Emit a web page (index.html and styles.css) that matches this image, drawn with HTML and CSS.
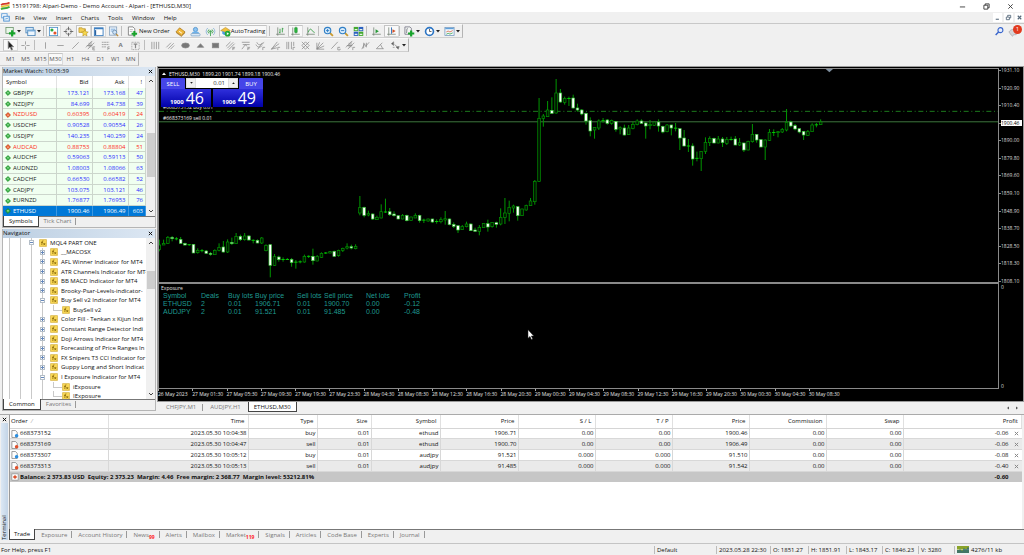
FILE: index.html
```html
<!DOCTYPE html>
<html lang="en">
<head>
<meta charset="utf-8">
<title>15191798: Alpari-Demo - Demo Account - Alpari - [ETHUSD,M30]</title>
<link rel="stylesheet" href="styles.css">
</head>
<body>
<svg class="defs" aria-hidden="true">
  <symbol id="caret" viewBox="0 0 4 3"><path d="M0 0h4L2 2.6z" fill="#222"/></symbol>
  <symbol id="i-up" viewBox="0 0 8 8"><path d="M4 .6 7.4 4 4 7.4 .6 4z" fill="#2fae3c" stroke="#137a1f" stroke-width=".7"/><path d="M2.6 4.2 4 2.6l1.4 1.6z" fill="#dff7df"/></symbol>
  <symbol id="i-down" viewBox="0 0 8 8"><path d="M4 .6 7.4 4 4 7.4 .6 4z" fill="#ec5a2a" stroke="#a83210" stroke-width=".7"/><path d="M2.6 3.8 4 5.4l1.4-1.6z" fill="#ffe6dc"/></symbol>
  <symbol id="i-ind" viewBox="0 0 8 8"><rect x=".4" y=".4" width="7.2" height="7.2" rx=".6" fill="#f7d655" stroke="#d0a93a" stroke-width=".6"/><path d="M4.4 1.8c-1-.4-1.2.6-1.3 1.6L2.8 6M2 3.4h2M4.4 4l1.8 2.2M6.2 4 4.4 6.2" stroke="#7a5a00" stroke-width=".7" fill="none"/></symbol>
  <symbol id="i-doc-b" viewBox="0 0 9 9"><path d="M1 .6h4l2 2v5.8H1z" fill="#fff" stroke="#666" stroke-width=".7"/><circle cx="6.3" cy="6.5" r="2" fill="#2b8fe0"/></symbol>
  <symbol id="i-doc-s" viewBox="0 0 9 9"><path d="M1 .6h4l2 2v5.8H1z" fill="#fff" stroke="#666" stroke-width=".7"/><circle cx="6.3" cy="6.5" r="2" fill="#e2502a"/></symbol>
  <symbol id="i-x" viewBox="0 0 6 6"><path d="M1 1l4 4M5 1 1 5" stroke="currentColor" stroke-width="1.2"/></symbol>
  <symbol id="i-axes" viewBox="0 0 12 12"><path d="M3 1.5v9M1.2 9h9.5" stroke="#6d7d6d" stroke-width=".8" fill="none"/></symbol>
  <symbol id="sc-up" viewBox="0 0 6 6"><path d="M1 4l2-2 2 2" stroke="#444" fill="none"/></symbol>
  <symbol id="sc-dn" viewBox="0 0 6 6"><path d="M1 2l2 2 2-2" stroke="#444" fill="none"/></symbol>
</svg>

<header class="titlebar">
  <svg class="logo" viewBox="0 0 12 10"><path d="M1 3.4C4 .8 6 3.6 10.5.6" stroke="#d23a2a" stroke-width="2" fill="none"/><path d="M1 5.8C4 3.2 6 6 10.5 3" stroke="#e8c32c" stroke-width="1.6" fill="none"/><path d="M1 8.2C4 5.6 6 8.4 10.5 5.4" stroke="#3da63a" stroke-width="2" fill="none"/></svg>
  <h1>15191798: Alpari-Demo - Demo Account - Alpari - [ETHUSD,M30]</h1>
  <div class="winctl">
    <button aria-label="Minimize"><svg viewBox="0 0 8 8"><path d="M1 4.5h6" stroke="#333"/></svg></button>
    <button aria-label="Restore"><svg viewBox="0 0 8 8"><path d="M1 2.5h4.5V7H1zM2.5 2.5V1H7v4.5H5.5" stroke="#333" fill="none"/></svg></button>
    <button aria-label="Close"><svg viewBox="0 0 8 8"><path d="M1.5 1.5l5 5M6.5 1.5l-5 5" stroke="#333"/></svg></button>
  </div>
</header>

<nav class="menubar">
  <svg class="doc" viewBox="0 0 10 10"><rect x=".8" y=".8" width="6" height="4.6" fill="#fff" stroke="#5b9bd8"/><rect x="3" y="3.6" width="6.2" height="5.4" fill="#e6f1fb" stroke="#4a8fd0"/><path d="M4.2 7.5l1.4-1.6 1 .8 1.4-1.6" stroke="#3c8bd0" fill="none" stroke-width=".7"/></svg>
  <button>File</button><button>View</button><button>Insert</button><button>Charts</button><button>Tools</button><button>Window</button><button>Help</button>
  <div class="mdi">
    <button aria-label="Minimize chart"><svg viewBox="0 0 8 8"><path d="M2 6h3.6" stroke="#56687a" stroke-width="1.2"/></svg></button>
    <button aria-label="Restore chart"><svg viewBox="0 0 8 8"><path d="M1.5 3.5h3.5v3H1.5zM3 3.2V1.5h3.5v3H5.2" stroke="#56687a" fill="none"/></svg></button>
    <button aria-label="Close chart"><svg viewBox="0 0 8 8"><path d="M2 2l4 4M6 2 2 6" stroke="#56687a" stroke-width="1.3"/></svg></button>
  </div>
</nav>

<div class="toolrow">
  <div class="toolbar">
    <button class="split" aria-label="New chart"><svg class="ic" viewBox="0 0 12 12"><rect x="1" y="1.5" width="8" height="6.5" fill="#e9f6e9" stroke="#5e8a5e" stroke-width=".8"/><path d="M7.8 4.5v7M4.3 8h7" stroke="#17a32b" stroke-width="2.4"/></svg><svg class="caret"><use href="#caret"/></svg></button>
    <button class="split" aria-label="Profiles"><svg class="ic" viewBox="0 0 12 12"><rect x="1" y="1.5" width="8" height="6" fill="#d6e9fa" stroke="#4682b8" stroke-width=".9"/><rect x="3" y="4.5" width="8" height="6" fill="#eef6fd" stroke="#4682b8" stroke-width=".9"/><path d="M3.4 5.4h7.2" stroke="#5fa0da"/></svg><svg class="caret"><use href="#caret"/></svg></button>
    <i class="sep"></i>
    <button class="on" aria-label="Market Watch"><svg class="ic" viewBox="0 0 12 12"><rect x="1.5" y="1.5" width="9" height="9" fill="#fff" stroke="#4a90c8" stroke-width=".9"/><circle cx="4.3" cy="4.3" r="1.7" fill="#29a83a"/><circle cx="7.6" cy="7.6" r="1.7" fill="#e5532a"/></svg></button>
    <button aria-label="Data Window"><svg class="ic" viewBox="0 0 12 12"><circle cx="6" cy="6" r="3.2" fill="none" stroke="#777" stroke-width=".9"/><path d="M6 .8v3.7M6 7.5v3.700M.8 6h3.700M7.5 6h3.700" stroke="#666"/></svg></button>
    <button class="on" aria-label="Navigator"><svg class="ic" viewBox="0 0 12 12"><path d="M1 2h3.5l.8 1H8v4H1z" fill="#f4cf55" stroke="#b08a1e" stroke-width=".7"/><path d="M7.5 4l1.2 2.3 2.5.3-1.9 1.7.5 2.5-2.300-1.200-2.300 1.200.5-2.500-1.900-1.700 2.500-.3z" fill="#f7d84c" stroke="#b08a1e" stroke-width=".6"/></svg></button>
    <button class="on" aria-label="Terminal"><svg class="ic" viewBox="0 0 12 12"><rect x="1.5" y="2" width="9.5" height="8.5" fill="#fff" stroke="#3d7fc0"/><path d="M1.5 2.8H11" stroke="#3d7fc0" stroke-width="1.5"/><path d="M2.7 4.5v5.5" stroke="#2d62a0" stroke-width="1.5"/></svg></button>
    <button aria-label="Strategy Tester"><svg class="ic" viewBox="0 0 12 12"><rect x="1.5" y="1" width="8" height="9" fill="#eaf2fa" stroke="#7d9ab8" stroke-width=".8"/><path d="M3 3.5h5M3 5.5h3" stroke="#7daee0"/><circle cx="7.3" cy="6.8" r="2.2" fill="#cfe4f7" stroke="#5c7fa3" stroke-width=".8"/><path d="M8.9 8.5l2.2 2.5" stroke="#c08a30" stroke-width="1.3"/></svg></button>
    <i class="sep"></i>
    <button class="wide"><svg class="ic" viewBox="0 0 12 12"><path d="M1.5 1h5l2 2v7h-7z" fill="#fff" stroke="#666" stroke-width=".8"/><path d="M3 4h3.5M3 6h3" stroke="#999" stroke-width=".7"/><path d="M8 5.5v6M5 8.5h6" stroke="#17a32b" stroke-width="2.2"/></svg>New Order</button>
    <button aria-label="MetaEditor"><svg class="ic" viewBox="0 0 12 12"><path d="M1 6.5 5 2l6 4.5L7 10.5z" fill="#f0b83a" stroke="#a8741a" stroke-width=".8"/><path d="M1.5 7.5 7 11.3l4-4" stroke="#a8741a" fill="none" stroke-width=".8"/><path d="M4.5 5.8l3 2" stroke="#fff"/></svg></button>
    <button aria-label="Cloud"><svg class="ic" viewBox="0 0 12 12"><circle cx="6" cy="3.8" r="2.3" fill="#8cc4f2" stroke="#3f86c4" stroke-width=".8"/><path d="M2 8.2c0-3.400 8-3.400 8 0z" fill="#6db1ea"/><rect x="1" y="8.2" width="10" height="2.6" rx="1" fill="#dcebf8" stroke="#6a94bb" stroke-width=".7"/></svg></button>
    <button aria-label="Signals"><svg class="ic" viewBox="0 0 12 12"><path d="M3 2.2a5 5 0 0 0 0 7.6M9 2.2a5 5 0 0 1 0 7.6" fill="none" stroke="#8fb6d8"/><path d="M4.3 3.8a3 3 0 0 0 0 4.4M7.7 3.8a3 3 0 0 1 0 4.4" fill="none" stroke="#4aa85a"/><circle cx="6" cy="6" r="1.4" fill="#4aa85a"/><path d="M6 7v4" stroke="#4aa85a"/></svg></button>
    <button class="wide auto on"><svg class="ic" viewBox="0 0 12 12"><path d="M.8 5 6 1.5 11.2 5 6 7z" fill="#f1c13e" stroke="#b5841c" stroke-width=".6"/><path d="M2.5 5.5v3c2 2 5 2 7 0v-3L6 7z" fill="#4d9be0"/><circle cx="8.3" cy="8.4" r="3.1" fill="#22a637"/><path d="M7.4 6.9v3l2.600-1.500z" fill="#fff"/></svg>AutoTrading</button>
    <i class="sep dbl"></i>
    <button aria-label="Bar chart"><svg class="ic" viewBox="0 0 12 12"><use href="#i-axes"/><path d="M5.5 3v5M4.5 7h1M8 2v5M8 3h1.2" stroke="#2a9a3a" stroke-width=".9"/></svg></button>
    <button class="on" aria-label="Candlesticks"><svg class="ic" viewBox="0 0 12 12"><use href="#i-axes"/><path d="M6.5.8v7.4" stroke="#188a28" stroke-width=".8"/><rect x="5.2" y="2" width="2.6" height="5" fill="#2bb53e" stroke="#188a28" stroke-width=".6"/></svg></button>
    <button aria-label="Line chart"><svg class="ic" viewBox="0 0 12 12"><use href="#i-axes"/><path d="M3.5 7C5 2.5 6.5 3 7.5 4.5S9.5 7 10.5 7" stroke="#2a9a3a" fill="none" stroke-width=".9"/></svg></button>
    <i class="sep"></i>
    <button aria-label="Zoom in"><svg class="ic" viewBox="0 0 12 12"><path d="M7.5 7.5l3.3 3.3" stroke="#c99a2c" stroke-width="2"/><circle cx="5" cy="5" r="3.5" fill="#d9ecfb" stroke="#2f7fc6" stroke-width="1.2"/><path d="M5 3.2v3.6M3.2 5h3.6" stroke="#2f7fc6"/></svg></button>
    <button aria-label="Zoom out"><svg class="ic" viewBox="0 0 12 12"><path d="M7.5 7.5l3.3 3.3" stroke="#c99a2c" stroke-width="2"/><circle cx="5" cy="5" r="3.5" fill="#d9ecfb" stroke="#2f7fc6" stroke-width="1.2"/><path d="M3.2 5h3.6" stroke="#2f7fc6"/></svg></button>
    <button aria-label="Tile windows"><svg class="ic" viewBox="0 0 12 12"><rect x=".8" y="1" width="5" height="4.6" fill="#43a82f"/><rect x="6.2" y="1" width="5" height="4.6" fill="#2d62c0"/><rect x=".8" y="6.2" width="5" height="4.6" fill="#2d62c0"/><rect x="6.2" y="6.2" width="5" height="4.6" fill="#43a82f"/><path d="M1.8 4h3M7.2 4h3M1.8 9.2h3M7.2 9.2h3" stroke="#e8f4e8" stroke-width="1.3"/></svg></button>
    <i class="sep"></i>
    <button aria-label="Auto scroll"><svg class="ic" viewBox="0 0 12 12"><use href="#i-axes"/><path d="M5 3.5v4.4l3.6-2.2z" fill="#2a9a3a"/></svg></button>
    <button class="on" aria-label="Chart shift"><svg class="ic" viewBox="0 0 12 12"><use href="#i-axes"/><path d="M6 1.5v7" stroke="#2f6fb6"/><path d="M7 3.500v4l3.500-2z" fill="#d4542a"/></svg></button>
    <i class="sep"></i>
    <button class="split" aria-label="Indicators"><svg class="ic" viewBox="0 0 12 12"><path d="M1 1h5.5l1.500 1.500V9H1z" fill="#f4f7f4" stroke="#667" stroke-width=".8"/><path d="M3.8 2.5c-1 1-.7 3-1 5" stroke="#556" fill="none" stroke-width=".8"/><path d="M7.8 4.8v6.7M4.4 8.200h6.800" stroke="#17a32b" stroke-width="2.4"/></svg><svg class="caret"><use href="#caret"/></svg></button>
    <button class="split" aria-label="Periods"><svg class="ic" viewBox="0 0 12 12"><circle cx="6" cy="6" r="4.3" fill="#fff" stroke="#2c75c4" stroke-width="1.8"/><path d="M6 3.2V6h2.2" stroke="#333" fill="none" stroke-width=".8"/></svg><svg class="caret"><use href="#caret"/></svg></button>
    <button class="split" aria-label="Templates"><svg class="ic" viewBox="0 0 12 12"><rect x="1" y="1.5" width="10" height="9" fill="#f3f9ff" stroke="#6d93b8" stroke-width=".8"/><path d="M1.4 2.8h9.2" stroke="#5fa0da" stroke-width="1.4"/><path d="M2.5 6.5l2-1 2 1 3-1.5" stroke="#d4542a" fill="none" stroke-width=".8"/><path d="M2.5 9l2-1 2 .8 3-1.3" stroke="#2a9a3a" fill="none" stroke-width=".8"/></svg><svg class="caret"><use href="#caret"/></svg></button>
  </div>
  <div class="corner">
    <button aria-label="Search"><svg class="ic" viewBox="0 0 12 12"><circle cx="7" cy="4.5" r="2.7" fill="#e7effc" stroke="#3a66cc" stroke-width="1.2"/><path d="M5 6.5 1.8 9.8" stroke="#3a66cc" stroke-width="1.6"/></svg></button>
    <button aria-label="Notifications"><svg class="ic" viewBox="0 0 12 12"><path d="M1 6.5c2-3 5-3.500 8-2v5L6 9.500l-1 1.700-1.500-1.300z" fill="#d5d5d8" stroke="#a5a5aa" stroke-width=".7"/></svg><span class="badge">1</span></button>
  </div>
</div>

<div class="toolrow">
  <div class="toolbar gray">
    <button class="on" aria-label="Cursor"><svg class="ic" viewBox="0 0 12 12"><path d="M3.5 1v8.500l2-1.800L7 11l1.300-.6L7 7.400h2.500z" fill="#222"/></svg></button>
    <button aria-label="Crosshair"><svg class="ic" viewBox="0 0 12 12"><path d="M6 1.5v3.5M6 7v3.5M1.5 6H5M7 6h3.5"/></svg></button>
    <i class="sep mid"></i>
    <button aria-label="Vertical line"><svg class="ic" viewBox="0 0 12 12"><path d="M6 2.5v7"/></svg></button>
    <button aria-label="Horizontal line"><svg class="ic" viewBox="0 0 12 12"><path d="M2.5 6h7"/></svg></button>
    <button aria-label="Trendline"><svg class="ic" viewBox="0 0 12 12"><path d="M2.5 9.5l7-7"/></svg></button>
    <button aria-label="Equidistant channel"><svg class="ic" viewBox="0 0 12 12"><path d="M1 8 8 1M3 10l7-7M4.5 3v5M6.5 2v6M2 6h6M8.5 7.5h2.5M8.5 9h2M8.5 10.8h2.5M8.5 7.5v3.3"/></svg></button>
    <button aria-label="Fibonacci"><svg class="ic" viewBox="0 0 12 12"><path d="M2 2.5h8M2 5h8M2 7.5h5M8.5 7.5H11M8.5 9.3h2M8.5 7.5V11" stroke-dasharray="2 .5"/></svg></button>
    <button class="letter">A</button>
    <button aria-label="Text label"><svg class="ic" viewBox="0 0 12 12"><rect x="2" y="2.5" width="8" height="8" stroke-dasharray="1 .8" fill="none"/><path d="M4 4.5h4M6 4.5v4.5" stroke-width="1.3"/></svg></button>
    <i class="sep mid"></i>
    <button aria-label="Cycle lines"><svg class="ic" viewBox="0 0 12 12"><path d="M2 2v8M4.5 2v8M7 2v8M9.5 2v8"/></svg></button>
    <button aria-label="Parallel lines"><svg class="ic" viewBox="0 0 12 12"><path d="M1.5 8l5-5M3.5 9.5l6-6M6 10l4-4"/></svg></button>
    <button aria-label="Ellipse"><svg class="ic" viewBox="0 0 12 12"><ellipse cx="6" cy="6" rx="4.2" ry="2.7" fill="#777"/></svg></button>
    <button aria-label="Triangle"><svg class="ic" viewBox="0 0 12 12"><path d="M2.5 8 6 4l3.5 4z" fill="#777"/></svg></button>
    <button aria-label="Rectangle"><svg class="ic" viewBox="0 0 12 12"><rect x="2.5" y="3.5" width="7" height="5" fill="#777"/></svg></button>
    <button aria-label="Fibonacci channel"><svg class="ic" viewBox="0 0 12 12"><path d="M1 7l5-5M2.5 9 9 2.5M4 10.5 10.5 4M8.5 8H11M8.5 9.5h2M8.5 8v3"/></svg></button>
    <button aria-label="Fibonacci expansion"><svg class="ic" viewBox="0 0 12 12"><path d="M2 2.5h8.5M3 5h7.5M2 10l4-5 1.500 2M8.5 8H11M8.5 9.5h2M8.5 8v3"/></svg></button>
    <button aria-label="Fibonacci arcs"><svg class="ic" viewBox="0 0 12 12"><path d="M2 2.5c1 3 4 4 8 0M1 5c2 4 5 3 7 1M3 10l5-7M8.5 8H11M8.5 8v3" fill="none"/></svg></button>
    <button aria-label="Fibonacci fan"><svg class="ic" viewBox="0 0 12 12"><path d="M1.5 10 8 2M1.5 10 10 4M1.5 10l6-1.5M8.5 8H11M8.5 8v3"/></svg></button>
    <button aria-label="Time zones"><svg class="ic" viewBox="0 0 12 12"><path d="M2 2v8M4 2v8M7 2v8M9.5 2v4.5M8.8 8H11M8.8 8v3"/></svg></button>
    <button aria-label="Gann grid"><svg class="ic" viewBox="0 0 12 12"><path d="M2 2l8 8M2 6l4 4M6 2l4 4M2 10l8-8M2 6l4-4M6 10l4-4"/></svg></button>
    <button aria-label="Gann fan"><svg class="ic" viewBox="0 0 12 12"><path d="M2 10V3M2 10l3-7.5M2 10l7-7M2 10l8-3.5M2 10h8"/></svg></button>
    <button aria-label="Gann line"><svg class="ic" viewBox="0 0 12 12"><path d="M1.5 9.5l7-7.5M8.5 8H11M8.5 8v2.800H11V9.5"/></svg></button>
    <button aria-label="Regression channel"><svg class="ic" viewBox="0 0 12 12"><path d="M1 8 8 1M3 10l7-7M4.5 3v5M6.5 2v6M2 6h6M8.5 8H11M8.5 8v3"/></svg></button>
    <button aria-label="Deviation channel"><svg class="ic" viewBox="0 0 12 12"><path d="M2 10 5 4l1 3 4-4.500M4 3v6M7 3v5"/></svg></button>
    <button aria-label="Angle"><svg class="ic" viewBox="0 0 12 12"><path d="M1.5 9.5h8M1.5 9.5 8 3M6 5l2.500 4.500"/></svg></button>
    <button class="split" aria-label="Arrows"><svg class="ic" viewBox="0 0 12 12"><path d="M1.5 4 4 2v4zM5 5l3 2.500M9 10 6.500 7.500 10 7zM3 8h2" fill="#555"/></svg><svg class="caret"><use href="#caret"/></svg></button>
  </div>
</div>

<div class="toolrow">
  <div class="toolbar periods">
    <button>M1</button><button>M5</button><button>M15</button><button class="on">M30</button><button>H1</button><button>H4</button><button>D1</button><button>W1</button><button>MN</button>
  </div>
</div>

<main class="work">
  <aside class="side">
    <section class="panel">
      <h2 class="ptitle">Market Watch: 10:05:39<button aria-label="Close Market Watch"><svg><use href="#i-x"/></svg></button></h2>
      <div class="pbody">
        <div class="mwclip">
        <table class="mw">
          <colgroup><col class="c1"><col class="c2"><col class="c2"><col></colgroup>
          <thead><tr><th>Symbol</th><th>Bid</th><th>Ask</th><th>!</th></tr></thead>
          <tbody>
            <tr><td><svg><use href="#i-up"/></svg>GBPJPY</td><td>173.121</td><td>173.168</td><td>47</td></tr>
            <tr><td><svg><use href="#i-up"/></svg>NZDJPY</td><td>84.699</td><td>84.738</td><td>39</td></tr>
            <tr class="dn"><td><svg><use href="#i-down"/></svg>NZDUSD</td><td>0.60395</td><td>0.60419</td><td>24</td></tr>
            <tr><td><svg><use href="#i-up"/></svg>USDCHF</td><td>0.90528</td><td>0.90554</td><td>26</td></tr>
            <tr><td><svg><use href="#i-up"/></svg>USDJPY</td><td>140.235</td><td>140.259</td><td>24</td></tr>
            <tr class="dn"><td><svg><use href="#i-down"/></svg>AUDCAD</td><td>0.88753</td><td>0.88804</td><td>51</td></tr>
            <tr><td><svg><use href="#i-up"/></svg>AUDCHF</td><td>0.59063</td><td>0.59113</td><td>50</td></tr>
            <tr><td><svg><use href="#i-up"/></svg>AUDNZD</td><td>1.08003</td><td>1.08066</td><td>63</td></tr>
            <tr><td><svg><use href="#i-up"/></svg>CADCHF</td><td>0.66530</td><td>0.66582</td><td>52</td></tr>
            <tr><td><svg><use href="#i-up"/></svg>CADJPY</td><td>103.075</td><td>103.121</td><td>46</td></tr>
            <tr><td><svg><use href="#i-up"/></svg>EURNZD</td><td>1.76877</td><td>1.76953</td><td>76</td></tr>
            <tr class="sel"><td><svg><use href="#i-up"/></svg>ETHUSD</td><td>1900.46</td><td>1906.49</td><td>603</td></tr>
          </tbody>
        </table>
        </div>
        <div class="scroll mws"><svg><use href="#sc-up"/></svg><i></i><svg><use href="#sc-dn"/></svg></div>
      </div>
      <div class="tabs"><button class="on">Symbols</button><button>Tick Chart</button></div>
    </section>
    <section class="panel">
      <h2 class="ptitle">Navigator<button aria-label="Close Navigator"><svg><use href="#i-x"/></svg></button></h2>
      <div class="pbody nav">
        <ul class="tree">
          <li class="l1"><b class="ex m"></b><svg><use href="#i-ind"/></svg>MQL4 PART ONE</li>
          <li><b class="ex"></b><svg><use href="#i-ind"/></svg>__MACOSX</li>
          <li><b class="ex"></b><svg><use href="#i-ind"/></svg>AFL Winner Indicator for MT4</li>
          <li><b class="ex"></b><svg><use href="#i-ind"/></svg>ATR Channels Indicator for MT4</li>
          <li><b class="ex"></b><svg><use href="#i-ind"/></svg>BB MACD Indicator for MT4</li>
          <li><b class="ex"></b><svg><use href="#i-ind"/></svg>Brooky-Psar-Levels-indicator-</li>
          <li><b class="ex m"></b><svg><use href="#i-ind"/></svg>Buy Sell v2 Indicator for MT4</li>
          <li class="l3"><svg><use href="#i-ind"/></svg>BuySell v2</li>
          <li><b class="ex"></b><svg><use href="#i-ind"/></svg>Color Fill - Tenkan x Kijun Indi</li>
          <li><b class="ex"></b><svg><use href="#i-ind"/></svg>Constant Range Detector Indi</li>
          <li><b class="ex"></b><svg><use href="#i-ind"/></svg>Doji Arrows Indicator for MT4</li>
          <li><b class="ex"></b><svg><use href="#i-ind"/></svg>Forecasting of Price Ranges In</li>
          <li><b class="ex"></b><svg><use href="#i-ind"/></svg>FX Snipers T3 CCI Indicator for</li>
          <li><b class="ex"></b><svg><use href="#i-ind"/></svg>Guppy Long and Short Indicat</li>
          <li><b class="ex m"></b><svg><use href="#i-ind"/></svg>I Exposure Indicator for MT4</li>
          <li class="l3"><svg><use href="#i-ind"/></svg>iExposure</li>
          <li class="l3"><svg><use href="#i-ind"/></svg>IExposure</li>
        </ul>
        <div class="scroll navs"><svg><use href="#sc-up"/></svg><i></i><svg><use href="#sc-dn"/></svg></div>
      </div>
      <div class="tabs"><button class="on">Common</button><button>Favorites</button></div>
    </section>
  </aside>

  <section class="charts">
    <div class="chart">
      <div class="plot">
        <svg id="candles" viewBox="0 15 2517 639" preserveAspectRatio="none" aria-label="ETHUSD M30 candlestick chart"></svg>
        <div class="oneclick">
          <p class="ctitle"><svg viewBox="0 0 4 3"><path d="M0 3h4L2 .4z" fill="#fff"/></svg>ETHUSD,M30&nbsp; 1899.20 1901.74 1899.18 1900.46</p>
          <div class="trade">
            <button class="side-btn">SELL</button>
            <div class="spin"><button aria-label="Decrease volume"><svg><use href="#caret"/></svg></button><input aria-label="Volume" value="0.01"><button class="inc" aria-label="Increase volume"><svg><use href="#caret"/></svg></button></div>
            <button class="side-btn">BUY</button>
          </div>
          <div class="quotes"><div><b>1900</b><span>46</span></div><div><b>1906</b><span>49</span></div></div>
          <p class="ord cut">#668373152 buy 0.01</p>
          <p class="ord">#668373169 sell 0.01</p>
        </div>
      </div>
      <div class="prices">
        <span>1931.10</span><span>1920.90</span><span>1910.40</span><span class="cur">1900.46</span><span>1890.00</span><span>1879.80</span><span>1869.60</span><span>1859.10</span><span>1848.90</span><span>1838.70</span><span>1828.50</span><span>1818.30</span><span>1808.10</span>
      </div>
      <div class="expo">
        <p>Exposure</p>
        <table>
          <colgroup><col class="w37"><col class="w27"><col class="w27"><col class="w42"><col class="w27"><col class="w42"><col class="w37"><col></colgroup>
          <thead><tr><th>Symbol</th><th>Deals</th><th>Buy lots</th><th>Buy price</th><th>Sell lots</th><th>Sell price</th><th>Net lots</th><th>Profit</th></tr></thead>
          <tbody>
            <tr><td>ETHUSD</td><td>2</td><td>0.01</td><td>1906.71</td><td>0.01</td><td>1900.70</td><td>0.00</td><td>-0.12</td></tr>
            <tr><td>AUDJPY</td><td>2</td><td>0.01</td><td>91.521</td><td>0.01</td><td>91.485</td><td>0.00</td><td>-0.48</td></tr>
          </tbody>
        </table>
        <svg class="pointer" viewBox="0 0 8 12"><path d="M1 .8v8.400l2-1.800 1.400 3.200 1.300-.6-1.400-3h2.500z" fill="#fff" stroke="#222" stroke-width=".5"/></svg>
      </div>
      <div class="prices sub"><span>0</span><span>0</span></div>
      <div class="times">
        <span>26 May 2023</span><span>27 May 01:30</span><span>27 May 05:30</span><span>27 May 09:30</span><span>27 May 19:30</span><span>27 May 23:30</span><span>28 May 04:30</span><span>28 May 08:30</span><span>28 May 12:30</span><span>28 May 16:30</span><span>28 May 20:30</span><span>29 May 00:30</span><span>29 May 04:30</span><span>29 May 08:30</span><span>29 May 12:30</span><span>29 May 16:30</span><span>29 May 20:30</span><span>30 May 00:30</span><span>30 May 04:30</span><span>30 May 08:30</span>
      </div>
    </div>
    <div class="ctabs"><button>CHFJPY,M1</button><button>AUDJPY,H1</button><button class="on">ETHUSD,M30</button>
      <div class="arrows"><button aria-label="Scroll left"><svg viewBox="0 0 4 4"><path d="M3 .5 1 2l2 1.5z" fill="#555"/></svg></button><button aria-label="Scroll right"><svg viewBox="0 0 4 4"><path d="M1 .5 3 2 1 3.5z" fill="#555"/></svg></button></div>
    </div>
  </section>
</main>

<section class="terminal">
  <div class="strip"><button aria-label="Close Terminal"><svg><use href="#i-x"/></svg></button><span>Terminal</span></div>
  <div class="tbody">
    <div class="tlist">
      <table class="orders">
        <colgroup><col class="o1"><col class="o2"><col class="o3"><col class="o4"><col class="o5"><col class="o6"><col class="o7"><col class="o7"><col class="o7"><col class="o7"><col class="o7"><col></colgroup>
        <thead><tr><th>Order &nbsp;<i>/</i></th><th>Time</th><th>Type</th><th>Size</th><th>Symbol</th><th>Price</th><th>S / L</th><th>T / P</th><th>Price</th><th>Commission</th><th>Swap</th><th>Profit</th></tr></thead>
        <tbody>
          <tr><td><svg><use href="#i-doc-b"/></svg>668373152</td><td>2023.05.30 10:04:38</td><td>buy</td><td>0.01</td><td>ethusd</td><td>1906.71</td><td>0.00</td><td>0.00</td><td>1900.46</td><td>0.00</td><td>0.00</td><td>-0.06<button aria-label="Close order"><svg><use href="#i-x"/></svg></button></td></tr>
          <tr><td><svg><use href="#i-doc-s"/></svg>668373169</td><td>2023.05.30 10:04:47</td><td>sell</td><td>0.01</td><td>ethusd</td><td>1900.70</td><td>0.00</td><td>0.00</td><td>1906.49</td><td>0.00</td><td>0.00</td><td>-0.06<button aria-label="Close order"><svg><use href="#i-x"/></svg></button></td></tr>
          <tr><td><svg><use href="#i-doc-b"/></svg>668373307</td><td>2023.05.30 10:05:12</td><td>buy</td><td>0.01</td><td>audjpy</td><td>91.521</td><td>0.000</td><td>0.000</td><td>91.510</td><td>0.00</td><td>0.00</td><td>-0.08<button aria-label="Close order"><svg><use href="#i-x"/></svg></button></td></tr>
          <tr><td><svg><use href="#i-doc-s"/></svg>668373313</td><td>2023.05.30 10:05:13</td><td>sell</td><td>0.01</td><td>audjpy</td><td>91.485</td><td>0.000</td><td>0.000</td><td>91.542</td><td>0.00</td><td>0.00</td><td>-0.40<button aria-label="Close order"><svg><use href="#i-x"/></svg></button></td></tr>
          <tr class="bal"><td colspan="11"><svg viewBox="0 0 9 9"><rect x="1" y="1" width="7" height="7" fill="#fff" stroke="#888" stroke-width=".7"/><path d="M4.5 2.5v4M2.5 4.5h4" stroke="#d8431c" stroke-width="1.5"/></svg>Balance: 2 373.83 USD&nbsp; Equity: 2 373.23&nbsp; Margin: 4.46&nbsp; Free margin: 2 368.77&nbsp; Margin level: 53212.81%</td><td>-0.60</td></tr>
        </tbody>
      </table>
    </div>
    <div class="tabs ttabs"><button class="on">Trade</button><button>Exposure</button><button>Account History</button><button>News<sub>99</sub></button><button>Alerts</button><button>Mailbox</button><button>Market<sub>119</sub></button><button>Signals</button><button>Articles</button><button>Code Base</button><button>Experts</button><button>Journal</button></div>
  </div>
</section>

<footer class="status">
  <span class="help">For Help, press F1</span>
  <span class="s1">Default</span><span class="s2">2023.05.28 22:30</span><span class="s3">O: 1851.27</span><span class="s3">H: 1851.91</span><span class="s4">L: 1843.17</span><span class="s4">C: 1846.23</span><span class="s4">V: 3280</span>
  <span class="s5"><svg viewBox="0 0 12 7"><rect width="12" height="7" fill="#8aa32a"/><path d="M0 3.5h12" stroke="#dfe8b0" stroke-width=".6"/><path d="M1 7V4M3 7V3.5M5 7V4.5M7 7V2.5M9 7V3M11 7V1.5" stroke="#1d5f86" stroke-width="1.3"/></svg>4276/11 kb</span>
</footer>
<script src="chart.js"></script>
</body>
</html>
```

FILE: styles.css
```css
* { box-sizing: border-box; }
body {
  margin: 0;
  height: 100vh;
  display: flex;
  flex-direction: column;
  overflow: hidden;
  background: #f0f0f0;
  color: #111;
  font: 6px/8px "Open Sans", "Noto Sans", sans-serif;
}
button, input, h1, h2, p, ul { font: inherit; color: inherit; margin: 0; padding: 0; }
button { border: 0; background: none; display: flex; align-items: center; justify-content: center; white-space: nowrap; }
svg { display: block; flex: none; }
table { border-collapse: collapse; table-layout: fixed; width: 100%; }
th, td { padding: 0; font-weight: 400; white-space: nowrap; overflow: hidden; }
.defs { position: absolute; width: 0; height: 0; }

.titlebar { display: flex; align-items: center; height: 12px; flex: none; background: #fff; }
.logo { width: 11px; height: 9px; }
.titlebar h1 { margin-left: 1px; flex: 1; }
.winctl { display: flex; padding-right: 2px; }
.winctl button { width: 24px; height: 12px; }
.winctl svg { width: 7px; height: 7px; }

.menubar { display: flex; align-items: center; height: 12px; flex: none; border-bottom: 1px solid #c8c8c8; padding-left: 1px; }
.menubar .doc { width: 9px; height: 9px; }
.menubar > button { padding: 0 5px 0 4px; }
.menubar > button:first-of-type { padding-left: 5px; }
.mdi { margin-left: auto; display: flex; gap: 2px; }
.mdi button { width: 9px; height: 9px; background: #fff; }
.mdi svg { width: 7px; height: 7px; }

.toolrow { display: flex; justify-content: space-between; height: 14px; flex: none; }
.toolbar { display: flex; align-items: center; padding-left: 3px; border-right: 1px solid #b4b4b4; border-bottom: 1px solid #cfcfcf; border-top: 1px solid #fafafa; }
.toolbar button { width: 15px; height: 12px; }
.toolbar .split { width: 20px; justify-content: space-between; padding: 0 2px; }
.toolbar .wide { width: auto; padding: 0 3px; gap: 1px; }
.toolbar .on { background: #f9f9f9; border: 1px solid #dadada; border-top-color: #c4c4c4; border-left-color: #c4c4c4; }
.toolbar .auto { margin-left: 1px; padding: 0 1px 0 0; gap: 0; }
.ic { width: 11px; height: 11px; }
.caret { width: 4px; height: 3px; }
.sep { width: 4px; height: 10px; border-left: 1px solid #bdbdbd; margin-right: -1px; }
.sep.dbl { width: 5px; margin-left: 2px; }
.sep.mid { width: 5px; margin-left: 1px; margin-right: -1px; }
.gray .ic { stroke: #888; stroke-width: .8; fill: none; }
.gray .letter { font-weight: 700; color: #777; }
.periods { width: 139px; color: #555; }
.corner { display: flex; align-items: center; gap: 2px; padding-right: 5px; }
.corner button { position: relative; width: 12px; height: 12px; }
.badge { position: absolute; right: -3px; top: 0; width: 9px; height: 9px; border-radius: 50%; background: #e23a1e; color: #fff; line-height: 9px; text-align: center; }

.work { display: flex; flex: none; height: 347px; }
.side { width: 157px; flex: none; padding: 1px 1px 1px 2px; display: flex; flex-direction: column; gap: 1px; }
.panel { border: 1px solid #b5b5b5; border-top: 0; }
.ptitle { display: flex; justify-content: space-between; align-items: center; height: 9px; background: linear-gradient(90deg, #bccfe2, #dce7f3); line-height: 9px; padding-right: 2px; }
.ptitle button svg { width: 5px; height: 5px; }
.pbody { display: flex; background: #fff; overflow: hidden; }
.mwclip { height: 140px; flex: 1; overflow: hidden; }
.mw { height: 141px; }
.mw .c1 { width: 53px; }
.mw .c2 { width: 36px; }
.mw th { height: 12px; text-align: right; padding-right: 3px; border-right: 1px solid #e2e2e2; }
.mw th:first-child { text-align: left; padding-left: 3px; }
.mw td { text-align: right; padding-right: 2px; background: #f0fff0; color: #2b2bff; border-right: 1px solid #ccd6cc; border-bottom: 1px solid #ccd6cc; }
.mw td:first-child { text-align: left; color: #222; padding-left: 2px; }
.mw td svg, .orders td svg { display: inline-block; vertical-align: middle; width: 6px; height: 6px; margin-right: 2px; }
.mw .dn td { color: #ff2a1a; }
.mw .sel td, .mw .sel td:first-child { background: #0078d7; color: #fff; border-right-color: #3c97e0; }
.scroll { width: 9px; flex: none; background: #f0f0f0; display: flex; flex-direction: column; align-items: center; padding: 2px 0; }
.scroll svg { width: 6px; height: 6px; }
.scroll i { width: 8px; background: #cdcdcd; }
.mws i { margin: 49px 0 auto; height: 44px; }
.navs i { margin: 25px 0 auto; height: 18px; }
.tabs { display: flex; height: 11px; border-top: 1px solid #777; color: #777; }
.tabs button { position: relative; padding: 0 5px; height: 8px; }
.tabs button::after { content: ""; position: absolute; right: 0; top: 1px; height: 7px; border-right: 1px solid #999; }
.tabs .on { background: #fff; color: #111; border: 1px solid #444; border-top: 0; margin-top: -1px; height: 11px; }
.tabs .on::after { display: none; }

.nav { height: 161px; }
.tree {
  flex: 1;
  overflow: hidden;
  height: 163px;
  display: grid;
  grid-template-rows: repeat(17, 1fr);
  list-style: none;
  background: linear-gradient(#c9c9c9, #c9c9c9) 6px 0 / 1px 100% no-repeat, linear-gradient(#c9c9c9, #c9c9c9) 17px 0 / 1px 100% no-repeat, linear-gradient(#c9c9c9, #c9c9c9) 28px 0 / 1px 100% no-repeat, linear-gradient(#c9c9c9, #c9c9c9) 39px 10px / 1px 100% no-repeat;
}
.tree li { display: flex; align-items: center; padding-left: 37px; white-space: nowrap; min-height: 0; }
.tree li.l1 { padding-left: 26px; }
.tree li.l3 { padding-left: 50px; }
.tree li.l3::before { content: ""; width: 8px; height: 5px; align-self: flex-start; border: solid #c9c9c9; border-width: 0 0 1px 1px; }
.tree li svg { width: 8px; height: 8px; margin: 0 3px 0 5px; }
.tree li.l3 svg { margin-left: 0; }
.ex { width: 5px; height: 5px; border: 1px solid #b4bec8; background: linear-gradient(#68b, #68b) 50% 50% / 3px 1px no-repeat, linear-gradient(#68b, #68b) 50% 50% / 1px 3px no-repeat, #fff; }
.ex.m { background: linear-gradient(#68b, #68b) 50% 50% / 3px 1px no-repeat, #fff; }

.charts { flex: 1; min-width: 0; display: flex; flex-direction: column; }
.chart {
  flex: 1;
  min-height: 0;
  background: #000;
  color: #d8d8d8;
  border: 1px solid #9a9a9a;
  padding-top: 1px;
  display: grid;
  grid-template-columns: 1fr 24px;
  grid-template-rows: 214px 1fr 12px;
  font-size: 5px;
  line-height: 6px;
}
.plot { position: relative; border: 1px solid #8a8a8a; border-bottom: 0; }
#candles { width: 100%; height: 100%; position: absolute; }
.oneclick { position: relative; width: 120px; padding: 1px 0 0 2px; }
.ctitle { display: flex; align-items: center; gap: 3px; height: 7px; color: #f0f0f0; padding-left: 1px; white-space: nowrap; }
.ctitle svg { width: 4px; height: 3px; }
.trade { display: flex; width: 102px; height: 12px; padding-top: 1px; color: #fff; font-size: 6px; justify-content: space-between; }
.side-btn { width: 24px; height: 11px; background: #4545e8; border-radius: 1px 1px 0 0; }
.spin { display: flex; width: 52px; height: 10px; background: #fff; }
.spin button { width: 10px; background: #efefef; border: 1px solid #ddd; }
.spin svg { width: 3px; height: 2px; }
.spin .inc svg { transform: rotate(180deg); }
.spin input { width: 32px; border: 0; background: #fff; color: #333; text-align: right; padding-right: 3px; }
.quotes { display: flex; gap: 2px; width: 102px; height: 18px; color: #fff; }
.quotes div { flex: 1; display: flex; align-items: baseline; justify-content: flex-end; gap: 2px; padding-right: 7px; background: linear-gradient(#3030dc, #0000a8); line-height: 18px; font-size: 16px; }
.quotes b { font-size: 6px; }
.ord { color: #f0f0f0; padding-left: 2px; height: 6px; }
.ord.cut { height: 3px; margin-bottom: 5px; overflow: hidden; display: flex; align-items: flex-end; }
.prices { display: flex; flex-direction: column; justify-content: space-between; padding-left: 2px; margin: -1px 0 -2px; }
.prices span { position: relative; height: 6px; }
.prices span::before { content: ""; position: absolute; left: -2px; top: 3px; width: 2px; border-top: 1px solid #8a8a8a; }
.prices .cur { background: #fff; color: #000; width: 21px; }
.prices.sub { margin: 0; padding-top: 2px; }
.prices.sub span::before { display: none; }
.expo { position: relative; border: 1px solid #8a8a8a; border-top-width: 2px; padding: 1px 2px; }
.expo p { color: #e0e0e0; }
.expo table { width: 270px; margin: 1px 0 0 2px; color: #1f9a90; font: 7px/8px "Liberation Sans", Arial, sans-serif; }
.expo th { text-align: left; }
.expo th, .expo td { overflow: visible; }
.w37 { width: 38px; } .w27 { width: 27px; } .w42 { width: 42px; }
.pointer { position: absolute; left: 368px; top: 45px; width: 8px; height: 12px; }
.times { grid-column: 1 / -1; display: flex; padding-right: 180px; color: #e4e4e4; }
.times span { flex: 1; min-width: 0; white-space: nowrap; background: linear-gradient(#aaa, #aaa) 0 0 / 1px 2px no-repeat; padding-top: 2px; }

.ctabs { display: flex; height: 11px; color: #777; padding-left: 2px; }
.ctabs > button { padding: 0 7px; height: 10px; position: relative; }
.ctabs > button:first-child::after { content: ""; position: absolute; right: 0; top: 2px; height: 7px; border-right: 1px solid #999; }
.ctabs .on { background: #fff; color: #111; border: 1px solid #444; border-top: 0; padding: 0 5px; }
.arrows { margin-left: auto; display: flex; padding-right: 3px; }
.arrows button { width: 9px; }
.arrows svg { width: 4px; height: 4px; }

.terminal { flex: 1; min-height: 0; display: flex; border-top: 1px solid #aaa; margin-top: 1px; }
.strip { width: 9px; flex: none; display: flex; flex-direction: column; align-items: center; padding-bottom: 3px; }
.strip button { height: 8px; }
.strip button svg { width: 5px; height: 5px; }
.strip span { flex: 1; width: 7px; line-height: 7px; writing-mode: vertical-rl; transform: rotate(180deg); background: linear-gradient(90deg, #c3d4e6, #dce8f4); }
.tbody { flex: 1; min-width: 0; display: flex; flex-direction: column; }
.tlist { flex: 1; background: #fff; border-left: 1px solid #999; margin-right: 2px; }
.orders { height: 67px; }
.o1 { width: 98px; } .o2 { width: 140px; } .o3 { width: 69px; } .o4 { width: 54px; } .o5 { width: 69px; } .o6 { width: 78px; } .o7 { width: 77px; }
.orders th { height: 13px; text-align: right; padding-right: 3px; border-right: 1px solid #e0e0e0; border-bottom: 1px solid #d5d5d5; }
.orders th i { color: #aaa; }
.orders th:first-child, .orders td:first-child { text-align: left; padding-left: 1px; }
.orders td { text-align: right; padding-right: 1px; border-right: 1px solid #d8d8d8; border-bottom: 1px solid #d8d8d8; }
.orders td:first-child svg { width: 8px; height: 8px; margin-right: 1px; }
.orders tr:nth-child(even) td { background: #eaeaea; }
.orders td:last-child { padding-right: 3px; border-right: 0; }
.orders td button { display: inline-block; vertical-align: middle; margin-left: 5px; height: 5px; color: #888; }
.orders td button svg { display: block; width: 5px; height: 5px; margin: 0; }
.orders .bal td { background: #c6c6c6; font-weight: 700; border: 0; color: #111; }
.orders .bal td:last-child { padding-right: 13px; }
.ttabs { height: 14px; gap: 1px; }
.ttabs button { padding: 0 5px; height: 10px; }
.ttabs .on { padding: 0 4px; }
.ttabs sub { color: #f22; font-size: 5px; font-weight: 700; line-height: 5px; align-self: flex-end; }

.status { display: flex; align-items: center; height: 12px; flex: none; border-top: 1px solid #c4c4c4; }
.status span { border-left: 1px solid #bbb; padding-left: 2px; white-space: nowrap; }
.status .help { flex: 1; border: 0; padding-left: 1px; }
.s1 { width: 62px; } .s2 { width: 54px; } .s3 { width: 38px; } .s4 { width: 36px; }
.s5 { width: 70px; display: flex; align-items: center; gap: 2px; }
.s5 svg { width: 12px; height: 7px; }
```

FILE: chart.js
```js
// Each candle: high, body top, body bottom, low, kind (u = rising, d = falling, x = doji).
const data = `527 543 556 562 u;527 538 543 543 u;516 520 538 540 u;516 520 524 532 d;519 523 526 529 x;519 526 538 540 d;536 538 543 545 d;540 541 543 546 x;540 541 567 567 d;553 559 566 569 u;555 558 562 565 x;558 561 568 570 d;564 568 571 575 d;556 559 572 572 u;538 550 559 562 u;531 549 564 566 d;526 534 564 567 u;521 535 539 543 d;507 517 539 540 u;512 517 527 531 d;507 516 527 530 u;513 516 528 530 d;526 528 530 538 x;526 529 537 538 d;519 522 537 540 u;541 544 560 562 u;541 542 604 640 d;570 578 604 606 u;575 579 587 593 d;580 585 588 593 x;582 585 588 588 x;582 586 596 608 d;588 593 596 614 x;589 592 595 598 x;572 577 594 596 u;574 576 578 582 x;554 577 590 602 d;573 577 591 592 u;565 568 580 582 u;564 566 568 570 x;561 563 567 568 u;560 562 577 579 d;557 559 575 578 u;551 553 559 564 u;538 548 552 556 u;542 548 552 556 d;541 547 554 556 u;396 431 447 454 u;428 430 454 460 d;440 449 453 457 u;448 450 465 468 d;455 460 467 468 u;421 443 462 463 u;404 442 446 447 x;432 443 452 456 d;442 450 455 458 d;453 455 465 466 d;450 454 465 466 u;452 454 470 472 d;458 459 469 470 u;448 454 462 462 u;452 454 470 476 d;464 467 470 477 x;464 465 471 473 u;464 465 474 477 d;466 471 474 479 x;460 467 473 478 u;441 464 468 482 u;463 465 482 484 d;475 481 487 492 d;484 485 498 507 d;483 487 497 498 u;473 480 488 490 u;478 480 500 501 d;491 498 502 502 d;483 490 502 514 u;477 478 491 492 u;467 479 489 503 d;474 475 488 491 u;473 476 481 491 d;433 460 480 484 u;402 447 460 480 u;410 430 448 472 u;422 426 432 446 u;426 428 455 470 d;434 435 455 456 u;422 424 438 440 u;402 411 425 426 u;348 352 413 422 u;102 163 352 354 u;150 156 163 188 u;111 138 158 159 u;100 139 148 150 d;45 87 147 149 u;75 87 114 117 d;98 103 115 122 u;98 102 105 126 x;92 102 132 134 d;119 132 138 143 d;135 138 150 154 d;146 148 171 182 d;160 170 201 217 d;189 190 198 224 u;166 171 192 198 u;162 168 172 176 x;165 168 178 182 d;167 169 178 182 u;171 172 196 203 d;187 191 195 211 u;182 192 213 215 d;183 192 212 213 u;172 181 193 196 u;166 171 182 184 u;166 171 178 180 d;174 177 186 224 d;168 181 185 196 u;173 174 184 186 u;166 174 186 203 d;185 187 204 208 d;180 183 203 205 u;182 183 192 214 d;177 191 194 202 x;192 194 222 258 d;198 222 246 248 d;225 244 248 264 x;238 246 285 305 d;263 281 285 292 x;261 262 284 321 u;220 235 262 270 u;217 223 236 246 u;221 223 237 238 d;216 225 237 238 u;219 225 236 249 d;219 226 238 243 u;218 225 228 230 x;216 225 243 244 d;222 236 243 246 u;236 237 258 264 d;230 232 258 259 u;180 211 233 236 u;210 211 228 236 d;225 227 249 250 d;226 228 249 288 u;195 205 229 230 u;196 204 207 216 x;201 203 206 220 u;192 196 204 207 u;135 175 198 202 u;170 174 186 190 d;180 185 195 199 d;192 194 204 208 d;201 202 213 228 d;198 203 214 216 u;178 183 203 204 u;177 180 185 190 x;166 174 182 183 u`;

const GREEN = "#009600";
const step = 12.8;
let out = `<path d="M0 142H2517" stroke="#1c7a1c" stroke-width="3" stroke-dasharray="15 8 3 8"/>
<path d="M0 173H2517" stroke="#4c5a4c" stroke-width="3"/><path d="M0 174H2517" stroke="#0b5a0b" stroke-width="2"/>
<path d="M2000 15h22l-11 10z" fill="#8090a0"/>`;
data.split(";").forEach((row, i) => {
  const [high, top, bottom, low, kind] = row.split(" ");
  const x = (1 + i * step).toFixed(1);
  const h = Math.max(2, bottom - top);
  const falling = kind === "d";
  out += `<path d="M${x} ${high}V${low}" stroke="${GREEN}" stroke-width="3"/>`;
  if (kind === "x") out += `<path d="M${x - 5} ${(+top + +bottom) / 2}h10" stroke="#00c800" stroke-width="3"/>`;
  else out += `<rect x="${x - 4}" y="${top}" width="8" height="${h}" fill="${falling ? "#fff" : "#001800"}" stroke="${falling ? "#30c030" : GREEN}" stroke-width="2"/>`;
});
document.getElementById("candles").innerHTML = out;
```
